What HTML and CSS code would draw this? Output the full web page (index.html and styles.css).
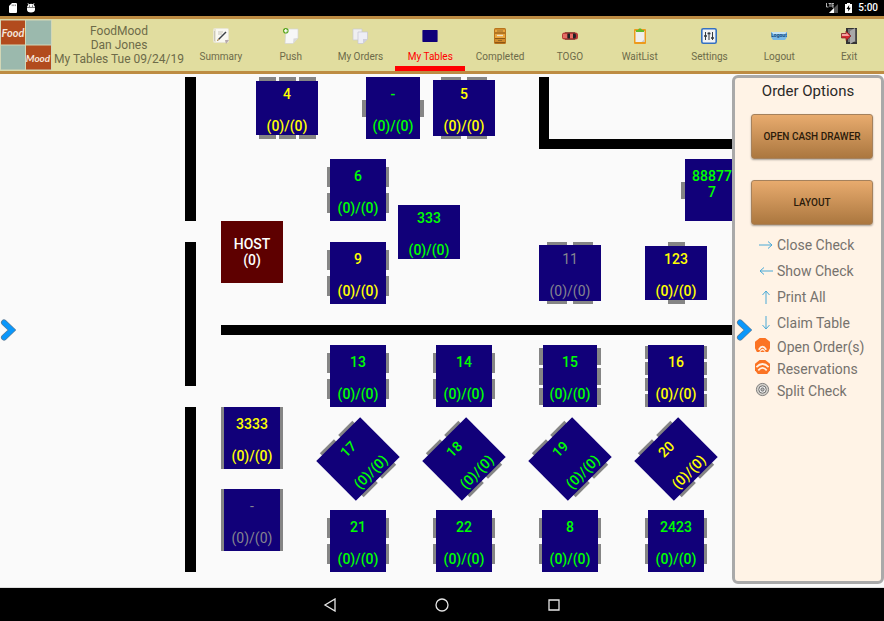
FILE: index.html
```html
<!DOCTYPE html>
<html lang="en">
<head>
<meta charset="utf-8">
<title>FoodMood - My Tables</title>
<link rel="stylesheet" href="styles.css">
</head>
<body>
<div class="status">
  <div class="status-group">
    <svg width="10" height="10" viewBox="0 0 10 10"><path fill="#fff" d="M4 0h4q1 0 1 1v8q0 1-1 1H2q-1 0-1-1V3z"/><path stroke="#555" stroke-width=".7" d="M4.2 1.5v1.6M5.8 1.5v1.6M7.4 1.5v1.6"/></svg>
    <svg width="10" height="10" viewBox="0 0 10 10"><path fill="#fff" d="M2 0l1 1.2Q5 .4 7 1.200L8 0l.5.5-.9 1.200Q9 3 9 4.500H1Q1 3 2.400 1.700L1.500.5zM1 5h8v1.500Q9 9.500 5 9.500T1 6.500z"/><circle cx="3.500" cy="3" r=".6"/><circle cx="6.500" cy="3" r=".6"/></svg>
  </div>
  <div class="status-group status-right">
    <svg width="13" height="11" viewBox="0 0 13 11"><path fill="#555" d="M12 1v9H3z"/><path fill="#fff" d="M8 5v5H3z"/><path d="M.5 0v4h2M2.500.5h3M4 .5V4M8 .5H6V4h2M6 2.200h2" fill="none" stroke="#ddd" stroke-width=".8"/></svg>
    <svg width="7" height="10" viewBox="0 0 7 10"><path fill="#fff" d="M2 0h3v1h2v9H0V1h2z"/><path d="M4.200 2L1.500 6h1.700v2.500L5.700 4.700H4z"/></svg>
    <span>5:00</span>
  </div>
</div>

<header class="header">
  <svg class="logo" viewBox="0 0 52 51" role="img" aria-label="Food Mood">
    <path fill="#d3d7b6" d="M0 0h52v51H0z"/>
    <path fill="#9bb9ad" d="M26 1h25v24H26zM1 26h24v24H1z"/>
    <path fill="#b24b1d" d="M1 1h24v24H1zM26 26h25v24H26z"/>
    <text x="13" y="17" class="logo-text">Food</text>
    <text x="38" y="42" class="logo-text">Mood</text>
  </svg>
  <div class="title"><div>FoodMood</div><div>Dan Jones</div><div>My Tables Tue 09/24/19</div></div>
  <nav class="tabs">
    <button class="tab"><svg class="tab-icon" viewBox="0 0 16 16"><rect x="0" y="0" width="16" height="15" rx="2" fill="#e9e6d3"/><path fill="#f9f8f2" d="M3 1h12v10l-3 3H3z"/><path stroke="#c9c7bb" d="M1.500 3v10M5 4h5M5 6h4"/><path d="M5 12l8-8" stroke="#3c4147" stroke-width="1.400"/><path d="M4 13l2-2" stroke="#c69d5d"/><path fill="#b7a9ac" d="M12 12h4l-3 4z"/></svg><span>Summary</span></button>
    <button class="tab"><svg class="tab-icon" viewBox="0 0 16 16"><path fill="#f7f7f7" stroke="#d4d4d4" stroke-width=".7" d="M3 1h12v9l-5 5.500H2z"/><path fill="#d9d9d9" d="M15 10l-5 5.500.5-5z"/><circle cx="2.800" cy="2.800" r="2.800" fill="#57a51c"/><path stroke="#fff" stroke-width="1.300" d="M1 2.800h3.600M2.800 1v3.600"/></svg><span>Push</span></button>
    <button class="tab"><svg class="tab-icon" viewBox="0 0 16 16"><path fill="#efeff1" stroke="#cacace" stroke-width=".7" d="M1 1h9v11H1z"/><path fill="#eeeef5" stroke="#c5c5d3" stroke-width=".7" d="M6 4h9.500v7L11 15.500H6z"/><path fill="#cfcfdc" d="M15.500 11L11 15.500V11z"/></svg><span>My Orders</span></button>
    <button class="tab tab-active"><svg class="tab-icon" viewBox="0 0 16 16"><path fill="#b7b39c" d="M0 3h16v10H0z"/><path fill="#110079" d="M.5 2h15v12H.5z"/></svg><span>My Tables</span></button>
    <button class="tab"><svg class="tab-icon" viewBox="0 0 16 16"><rect x="2" width="12" height="16" rx="1.500" fill="#b9731c"/><path fill="#eaa63f" d="M3 1.500h10v3H3zM3 5.500h10v4.500H3z"/><path fill="#d18b2b" d="M3 11h10v3H3z"/><path stroke="#7b4a13" stroke-width=".7" d="M3 5h10M3 10.500h10M3 14.500h10"/><path stroke="#e9e1cd" stroke-width="1.300" d="M5 7.500h6"/><path stroke="#775626" stroke-width=".7" d="M5 3h6M6 12.500h4"/></svg><span>Completed</span></button>
    <button class="tab"><svg class="tab-icon" viewBox="0 0 16 16"><rect x="0" y="4.500" width="16" height="7" rx="2.500" fill="#b83a37"/><path fill="#e46c64" d="M1 6h4v4H1zM8 6h3v4H8z"/><path fill="#1d2224" d="M5.500 5.500H8v5H5.500zM11 5.500h2.500q1 2.500 0 5H11z"/><path stroke="#712421" d="M3 4.500h10M3 11.500h10" stroke-width=".6"/></svg><span>TOGO</span></button>
    <button class="tab"><svg class="tab-icon" viewBox="0 0 16 16"><rect x="2" y="1" width="12" height="15" rx="1" fill="#ed9a1c"/><path fill="#eeeeed" d="M3.500 3h9v11h-9z"/><path fill="#c9c9c9" d="M12.500 11v3h-3z"/><path fill="#62b928" d="M4 2h2l1-1.500h2L10 2h2v2H4z"/></svg><span>WaitList</span></button>
    <button class="tab"><svg class="tab-icon" viewBox="0 0 16 16"><rect x=".8" y=".8" width="14.400" height="14.400" rx="1.500" fill="#f2f3f4" stroke="#3470c1" stroke-width="1.600"/><path stroke="#353b42" d="M4.500 4v8M8 4v8M11.500 4v8"/><path stroke="#353b42" stroke-width="1.500" d="M3 8h3M6.500 5.500h3M10 10h3"/></svg><span>Settings</span></button>
    <button class="tab"><svg class="tab-icon" viewBox="0 0 16 16"><path fill="#79b9e6" d="M0 4h16v5l-2 3H2L0 9z"/><path fill="#c3e3f5" d="M1 4h14v2H1z"/><text x="8" y="9" class="logout-text">Logout</text></svg><span>Logout</span></button>
    <button class="tab"><svg class="tab-icon" viewBox="0 0 16 16"><path fill="#343434" d="M5 0h11v16H5z"/><path fill="#777" d="M7 1h7v13H7z"/><path fill="#a8a8a8" d="M9 3l5-3v13l-5 3z"/><path fill="#555" d="M14 1h1.500v13H14z"/><path fill="#d32b30" stroke="#791c1f" stroke-width=".7" d="M.5 5.500H5V3l5 5-5 4.500V10H.5z"/><path fill="#f3a09f" d="M1 6h4.500V4.500L8.500 8H1z"/></svg><span>Exit</span></button>
  </nav>
</header>

<main class="main">
  <section class="floor" aria-label="Floor plan">
    <div class="wall wall-a"></div>
    <div class="wall wall-b"></div>
    <div class="wall wall-c"></div>
    <div class="wall wall-d"></div>
    <div class="wall wall-e"></div>
    <div class="wall wall-f"></div>

    <button class="table wide narrow busy" style="left:256px;top:3px"><i class="seats s3"><b></b><b></b><b></b></i><span class="name">4</span><span class="count">(0)/(0)</span></button>
    <button class="table tall narrow free" style="left:362px;top:3px"><i class="seats s1"><b></b></i><span class="name">-</span><span class="count">(0)/(0)</span></button>
    <button class="table wide busy" style="left:433px;top:3px"><i class="seats s2"><b></b><b></b></i><span class="name">5</span><span class="count">(0)/(0)</span></button>
    <button class="table tall free" style="left:327px;top:85px"><i class="seats s2"><b></b><b></b></i><span class="name">6</span><span class="count">(0)/(0)</span></button>
    <button class="table wide narrow free" style="left:398px;top:127px"><span class="name">333</span><span class="count">(0)/(0)</span></button>
    <button class="table tall narrow free" style="left:681px;top:85px"><i class="seats s1"><b></b></i><span class="name">88877<br>7</span></button>
    <button class="host" style="left:221px;top:147px">HOST<br>(0)</button>
    <button class="table tall busy" style="left:327px;top:168px"><i class="seats s2"><b></b><b></b></i><span class="name">9</span><span class="count">(0)/(0)</span></button>
    <button class="table wide off" style="left:539px;top:168px"><i class="seats s2"><b></b><b></b></i><span class="name">11</span><span class="count">(0)/(0)</span></button>
    <button class="table wide narrow busy" style="left:645px;top:168px"><i class="seats s1"><b></b></i><span class="name">123</span><span class="count">(0)/(0)</span></button>
    <button class="table tall free" style="left:327px;top:271px"><i class="seats s2"><b></b><b></b></i><span class="name">13</span><span class="count">(0)/(0)</span></button>
    <button class="table tall free" style="left:433px;top:271px"><i class="seats s2"><b></b><b></b></i><span class="name">14</span><span class="count">(0)/(0)</span></button>
    <button class="table tall narrow free" style="left:539px;top:271px"><i class="seats s3"><b></b><b></b><b></b></i><span class="name">15</span><span class="count">(0)/(0)</span></button>
    <button class="table tall busy" style="left:645px;top:271px"><i class="seats s4"><b></b><b></b><b></b><b></b></i><span class="name">16</span><span class="count">(0)/(0)</span></button>
    <button class="table tall busy" style="left:221px;top:333px"><i class="seats bench"><b></b></i><span class="name">3333</span><span class="count">(0)/(0)</span></button>
    <button class="table wide turned free" style="left:327px;top:354px"><i class="seats s2"><b></b><b></b></i><span class="name">17</span><span class="count">(0)/(0)</span></button>
    <button class="table wide turned free" style="left:433px;top:354px"><i class="seats s2"><b></b><b></b></i><span class="name">18</span><span class="count">(0)/(0)</span></button>
    <button class="table wide turned free" style="left:539px;top:354px"><i class="seats s2"><b></b><b></b></i><span class="name">19</span><span class="count">(0)/(0)</span></button>
    <button class="table wide turned busy" style="left:645px;top:354px"><i class="seats s2"><b></b><b></b></i><span class="name">20</span><span class="count">(0)/(0)</span></button>
    <button class="table tall off" style="left:221px;top:415px"><i class="seats bench"><b></b></i><span class="name">-</span><span class="count">(0)/(0)</span></button>
    <button class="table tall free" style="left:327px;top:436px"><i class="seats s2"><b></b><b></b></i><span class="name">21</span><span class="count">(0)/(0)</span></button>
    <button class="table tall free" style="left:433px;top:436px"><i class="seats s2"><b></b><b></b></i><span class="name">22</span><span class="count">(0)/(0)</span></button>
    <button class="table tall free" style="left:539px;top:436px"><i class="seats s2"><b></b><b></b></i><span class="name">8</span><span class="count">(0)/(0)</span></button>
    <button class="table tall free" style="left:645px;top:436px"><i class="seats s2"><b></b><b></b></i><span class="name">2423</span><span class="count">(0)/(0)</span></button>

    <button class="drawer drawer-floor" aria-label="Open left drawer"><svg width="16" height="24" viewBox="0 0 16 24"><path d="M4 4.500l8 7.500-8 7.500" fill="none" stroke="#5b7d99" stroke-width="6" stroke-linecap="round"/><path d="M4 4.500l8 7.500-8 7.500" fill="none" stroke="#0a97fb" stroke-width="4.600" stroke-linecap="round"/></svg></button>
  </section>

  <aside class="options">
    <h2>Order Options</h2>
    <button class="action">OPEN CASH DRAWER</button>
    <button class="action">LAYOUT</button>
    <ul class="links">
      <li><button class="row"><svg class="arrow" viewBox="0 0 14 14"><path d="M0 7h13M9 3.500L13 7l-4 3.500"/></svg>Close Check</button></li>
      <li><button class="row"><svg class="arrow" viewBox="0 0 14 14"><path d="M14 7H1M5 3.500L1 7l4 3.500"/></svg>Show Check</button></li>
      <li><button class="row"><svg class="arrow" viewBox="0 0 14 14"><path d="M7 14V1M3.500 5L7 1l3.500 4"/></svg>Print All</button></li>
      <li><button class="row"><svg class="arrow" viewBox="0 0 14 14"><path d="M7 0v13M3.500 9L7 13l3.500-4"/></svg>Claim Table</button></li>
      <li><button class="row short"><svg class="badge" viewBox="0 0 16 16"><path fill="#fb7323" d="M5 0h6l5 4v7l-2 4h-2.500q-3.500-7-7 0H2l-2-4V4z"/><path d="M4 12.500q4-6.500 8 0" fill="none" stroke="#fff1e3" stroke-width="1.800"/><path fill="#fb7323" d="M5.500 15q2.500-4 5 0z"/></svg>Open Order(s)</button></li>
      <li><button class="row short"><svg class="badge" viewBox="0 0 16 16"><path fill="#fb7323" d="M5 0h6l5 4v7l-3 4H3l-3-4V4z"/><path d="M1.500 7.500q6.500-6.500 13 0M3.500 11q4.500-5 9 0" fill="none" stroke="#fff1e3" stroke-width="1.900"/></svg>Reservations</button></li>
      <li><button class="row short"><svg class="badge" viewBox="0 0 16 16"><circle cx="8" cy="8" r="6.500" fill="#d5d2cc" stroke="#777"/><circle cx="8" cy="8" r="4" fill="#eee" stroke="#666"/><circle cx="8" cy="8" r="1.700" fill="#bbb" stroke="#666"/></svg>Split Check</button></li>
    </ul>
    <button class="drawer drawer-options" aria-label="Close options"><svg width="16" height="24" viewBox="0 0 16 24"><path d="M4 4.500l8 7.500-8 7.500" fill="none" stroke="#5b7d99" stroke-width="6" stroke-linecap="round"/><path d="M4 4.500l8 7.500-8 7.500" fill="none" stroke="#0a97fb" stroke-width="4.600" stroke-linecap="round"/></svg></button>
  </aside>
</main>

<nav class="system">
  <button aria-label="Back"><svg width="14" height="14" viewBox="0 0 14 14"><path d="M12 1v12L2 7z"/></svg></button>
  <button aria-label="Home"><svg width="14" height="14" viewBox="0 0 14 14"><circle cx="7" cy="7" r="6"/></svg></button>
  <button aria-label="Recent apps"><svg width="14" height="14" viewBox="0 0 14 14"><path d="M2 2h10v10H2z"/></svg></button>
</nav>
</body>
</html>
```
FILE: styles.css
```css
* { box-sizing: border-box; }

body {
  margin: 0;
  min-height: 100vh;
  display: flex;
  flex-direction: column;
  background: #fafafa;
  font-family: Roboto, sans-serif;
}

button {
  margin: 0;
  padding: 0;
  border: 0;
  background: none;
  font: inherit;
  color: inherit;
  cursor: pointer;
}

svg { display: block; flex: none; }

.status {
  display: flex;
  justify-content: space-between;
  height: 16px;
  padding: 0 6px 0 8px;
  background: #000;
  color: #fff;
}
.status-group { display: flex; align-items: center; gap: 8px; }
.status-right { gap: 6px; font-size: 10px; font-weight: 500; }
.status-right span { line-height: 16px; }

.header {
  display: flex;
  height: 58px;
  border-top: 3px solid #bd8c43;
  border-bottom: 3px solid #bd8c43;
  background: #e1dd9f;
  color: #6d6b49;
}
.logo { width: 52px; height: 52px; }
.logo-text {
  font: italic 700 11px Lato, sans-serif;
  fill: #f5e5db;
  text-anchor: middle;
}
.logo-text:last-of-type { font-size: 10px; }
.title {
  width: 134px;
  padding-top: 5px;
  font-size: 12px;
  line-height: 14px;
  text-align: center;
  white-space: nowrap;
}
.tabs { flex: 1; display: flex; }
.tab {
  flex: 1 1 0;
  display: flex;
  flex-direction: column;
  align-items: center;
  gap: 6px;
  padding-top: 9px;
  border-bottom: 5px solid transparent;
  font-size: 10px;
  line-height: 14px;
}
.tab-active { color: #f00; border-color: #f00; }
.tab-icon { width: 16px; height: 16px; }
.logout-text { font: 700 5px Roboto, sans-serif; fill: #174c7f; text-anchor: middle; }

.main { flex: 1; display: flex; border-bottom: 1px solid #ddd; }
.floor { position: relative; flex: 1; min-width: 0; overflow: hidden; }

.wall { position: absolute; background: #000; }
.wall-a { left: 185px; top: 3px; width: 11px; height: 144px; }
.wall-b { left: 185px; top: 168px; width: 11px; height: 144px; }
.wall-c { left: 185px; top: 333px; width: 11px; height: 165px; }
.wall-d { left: 539px; top: 3px; width: 10px; height: 72px; }
.wall-e { left: 539px; top: 65px; right: 0; height: 10px; }
.wall-f { left: 221px; top: 251px; right: 0; height: 10px; }

.table, .host {
  position: absolute;
  width: 62px;
  height: 62px;
  font-size: 14px;
  font-weight: 500;
  line-height: 16px;
  text-align: center;
}
.host { background: #5e0000; color: #fff; }
.table::before { content: ""; position: absolute; z-index: 1; background: #110079; }
.wide::before { inset: 3px 0; }
.tall::before { inset: 0 3px; }
.wide.narrow::before { inset: 4px 0; }
.tall.narrow::before { inset: 0 4px; }
.turned { transform: rotate(-45deg); }
.free { color: #0f0; }
.busy { color: #ff0; }
.off { color: #85858f; font-weight: 400; }

.name, .count { position: absolute; z-index: 2; left: 0; right: 0; }
.name { top: 9px; }
.count { top: 41px; }

/* Seats run along both sides; the table top covers their middles. */
.seats {
  position: absolute;
  z-index: 0;
  inset: 0;
  display: flex;
  justify-content: center;
  gap: 3px;
}
.seats b { flex: none; width: 17px; background: #858585; }
.tall .seats { flex-direction: column; }
.tall .seats b { width: auto; height: 17px; }
.seats.s2 { gap: 6px; }
.wide .s2 b { width: 20px; }
.tall .s2 b { height: 20px; }
.tall .s4 b { height: 13px; }
.tall .bench b { height: 62px; }

.options {
  position: relative;
  width: 152px;
  margin: 1px 0 3px;
  padding: 4px 8px 0 16px;
  border: 3px solid #a9a9a9;
  border-radius: 6px;
  background: #fff3e6;
  color: #76726d;
}
.options h2 {
  margin: 0 8px 14px 0;
  font-size: 15px;
  font-weight: 400;
  line-height: 18px;
  text-align: center;
  color: #2b2926;
}
.action {
  display: block;
  width: 100%;
  height: 45px;
  margin-bottom: 21px;
  border: 1px solid #a5815c;
  border-radius: 3px;
  background: linear-gradient(#e8ab6e, #ab773f);
  box-shadow: 0 1px 2px #0005;
  font-size: 10px;
  font-weight: 500;
  color: #2b1b0a;
}
.links { margin: -14px 0 0; padding: 0; list-style: none; }
.row {
  display: flex;
  align-items: center;
  gap: 4px;
  height: 26px;
  padding-left: 8px;
  font-size: 14px;
  white-space: nowrap;
}
.row.short { height: 22px; gap: 7px; padding-left: 4px; }
.arrow { width: 14px; height: 14px; fill: none; stroke: #4ba9d6; stroke-width: 1; }
.badge { width: 15px; height: 15px; margin-bottom: 4px; }

.drawer { position: absolute; width: 16px; height: 24px; }
.drawer-floor { left: 0; top: 244px; }
.drawer-options { left: 1px; top: 240px; }

.system {
  display: flex;
  justify-content: center;
  align-items: center;
  gap: 98px;
  height: 33px;
  background: #000;
}
.system svg { fill: none; stroke: #e6e6e6; stroke-width: 1.3; }
```
